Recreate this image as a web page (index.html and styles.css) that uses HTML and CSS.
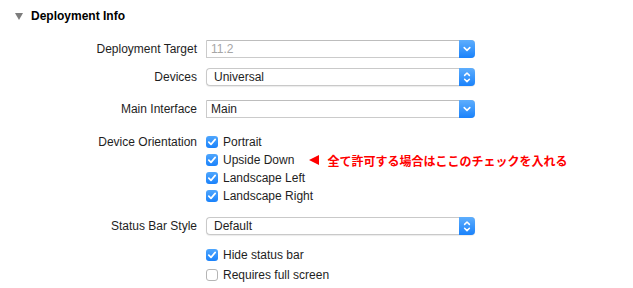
FILE: index.html
```html
<!DOCTYPE html>
<html>
    <head>
        <title>Deployment Info</title>
        <meta charset="UTF-8">
        <meta name="viewport" content="width=device-width, initial-scale=1.0">
        <link rel="stylesheet" href="styles.css">
    </head>
    <body>
        <div class="sectionHeader">
            <span class="disclosure"></span>
            <span class="sectionTitle">Deployment Info</span>
        </div>
        <div class="formContainer">
            <div class="row">
                <div class="rowLabel">Deployment Target</div>
                <div class="combo">
                    <span class="comboValue disabled">11.2</span>
                    <span class="blueButton">
                        <svg width="16" height="18" viewBox="0 0 16 18"><path d="M5.2 7.6 L8 10.3 L10.8 7.6" fill="none" stroke="#fff" stroke-width="1.6" stroke-linecap="round" stroke-linejoin="round"/></svg>
                    </span>
                </div>
            </div>
            <div class="row devicesRow">
                <div class="rowLabel">Devices</div>
                <div class="popup">
                    <span class="popupValue">Universal</span>
                    <span class="blueButton">
                        <svg width="16" height="18" viewBox="0 0 16 18"><path d="M5.6 7.4 L8 5 L10.4 7.4 M5.6 11.2 L8 13.6 L10.4 11.2" fill="none" stroke="#fff" stroke-width="1.5" stroke-linecap="round" stroke-linejoin="round"/></svg>
                    </span>
                </div>
            </div>
            <div class="row interfaceRow">
                <div class="rowLabel">Main Interface</div>
                <div class="combo">
                    <span class="comboValue">Main</span>
                    <span class="blueButton">
                        <svg width="16" height="18" viewBox="0 0 16 18"><path d="M5.2 7.6 L8 10.3 L10.8 7.6" fill="none" stroke="#fff" stroke-width="1.6" stroke-linecap="round" stroke-linejoin="round"/></svg>
                    </span>
                </div>
            </div>
            <div class="row orientationRow">
                <div class="rowLabel checkLabelAlign">Device Orientation</div>
                <div class="checkList">
                    <div class="checkRow"><span class="checkbox checked"><svg width="12" height="12" viewBox="0 0 12 12"><path d="M2.8 6.2 L5 8.4 L9.2 3.4" fill="none" stroke="#fff" stroke-width="1.7" stroke-linecap="round" stroke-linejoin="round"/></svg></span>Portrait</div>
                    <div class="checkRow"><span class="checkbox checked"><svg width="12" height="12" viewBox="0 0 12 12"><path d="M2.8 6.2 L5 8.4 L9.2 3.4" fill="none" stroke="#fff" stroke-width="1.7" stroke-linecap="round" stroke-linejoin="round"/></svg></span>Upside Down<span class="note"><span class="noteArrow"></span>全て許可する場合はここのチェックを入れる</span></div>
                    <div class="checkRow"><span class="checkbox checked"><svg width="12" height="12" viewBox="0 0 12 12"><path d="M2.8 6.2 L5 8.4 L9.2 3.4" fill="none" stroke="#fff" stroke-width="1.7" stroke-linecap="round" stroke-linejoin="round"/></svg></span>Landscape Left</div>
                    <div class="checkRow"><span class="checkbox checked"><svg width="12" height="12" viewBox="0 0 12 12"><path d="M2.8 6.2 L5 8.4 L9.2 3.4" fill="none" stroke="#fff" stroke-width="1.7" stroke-linecap="round" stroke-linejoin="round"/></svg></span>Landscape Right</div>
                </div>
            </div>
            <div class="row statusRow">
                <div class="rowLabel">Status Bar Style</div>
                <div class="popup">
                    <span class="popupValue">Default</span>
                    <span class="blueButton">
                        <svg width="16" height="18" viewBox="0 0 16 18"><path d="M5.6 7.4 L8 5 L10.4 7.4 M5.6 11.2 L8 13.6 L10.4 11.2" fill="none" stroke="#fff" stroke-width="1.5" stroke-linecap="round" stroke-linejoin="round"/></svg>
                    </span>
                </div>
            </div>
            <div class="row statusChecks">
                <div class="rowLabel"></div>
                <div class="checkList">
                    <div class="checkRow tall"><span class="checkbox checked"><svg width="12" height="12" viewBox="0 0 12 12"><path d="M2.8 6.2 L5 8.4 L9.2 3.4" fill="none" stroke="#fff" stroke-width="1.7" stroke-linecap="round" stroke-linejoin="round"/></svg></span>Hide status bar</div>
                    <div class="checkRow tall"><span class="checkbox"></span>Requires full screen</div>
                </div>
            </div>
        </div>
    </body>
</html>
```

FILE: styles.css
```css
body{
    margin: 0;
    background-color: #ffffff;
    font-family: "Liberation Sans", Arial, sans-serif;
    font-size: 12px;
    color: #1e1e1e;
}

.sectionHeader{
    display: flex;
    align-items: center;
    height: 32px;
    padding-left: 15px;
}
.disclosure{
    width: 0;
    height: 0;
    border-left: 4px solid transparent;
    border-right: 4px solid transparent;
    border-top: 7px solid #7d7d7d;
    margin-right: 8px;
}
.sectionTitle{
    font-weight: bold;
    font-size: 12px;
    color: #000;
}

.formContainer{
    display: flex;
    flex-direction: column;
    padding-top: 8px;
}
.row{
    display: flex;
    align-items: center;
}
.devicesRow{
    margin-top: 10px;
}
.interfaceRow{
    margin-top: 14px;
}
.orientationRow{
    margin-top: 15px;
    align-items: flex-start;
}
.statusRow{
    margin-top: 12px;
}
.statusChecks{
    margin-top: 10px;
}
.rowLabel{
    width: 197px;
    margin-right: 9px;
    text-align: right;
    flex-shrink: 0;
}
.checkLabelAlign{
    line-height: 18px;
}

.combo, .popup{
    display: flex;
    align-items: stretch;
    width: 269px;
    height: 18px;
    box-sizing: border-box;
    background-color: #fff;
}
.combo{
    border: 1px solid #cbcbcb;
    border-top-color: #bdbdbd;
    border-right: none;
    border-radius: 0 4px 4px 0;
}
.popup{
    border: 1px solid #c9c9c9;
    border-right: none;
    border-radius: 4px;
    box-shadow: 0 1px 1px rgba(0, 0, 0, 0.08);
}
.comboValue{
    flex: 1;
    padding-left: 4px;
    line-height: 16px;
}
.comboValue.disabled{
    color: #a6a6a6;
}
.popupValue{
    flex: 1;
    padding-left: 7px;
    line-height: 16px;
}
.blueButton{
    width: 16px;
    margin: -1px 0;
    display: flex;
    align-items: center;
    justify-content: center;
    border-radius: 0 4px 4px 0;
    background: linear-gradient(#5eaefd, #1a82fb);
}

.checkList{
    display: flex;
    flex-direction: column;
}
.checkRow{
    display: flex;
    align-items: center;
    height: 18px;
}
.checkRow.tall{
    height: 20px;
}
.checkbox{
    width: 12px;
    height: 12px;
    box-sizing: border-box;
    border: 1px solid #b5b5b5;
    border-radius: 3px;
    background-color: #fff;
    margin-right: 5px;
    display: flex;
    align-items: center;
    justify-content: center;
}
.checkbox.checked{
    border: none;
    background: linear-gradient(#4fa6fd, #1a82fb);
}

.note{
    display: flex;
    align-items: center;
    margin-left: 15px;
    color: #ff0000;
    font-weight: bold;
    font-family: "Noto Sans CJK JP", sans-serif;
    font-size: 12px;
}
.noteArrow{
    width: 0;
    height: 0;
    border-top: 5px solid transparent;
    border-bottom: 5px solid transparent;
    border-right: 10px solid #ff0000;
    margin-right: 8px;
}
```
